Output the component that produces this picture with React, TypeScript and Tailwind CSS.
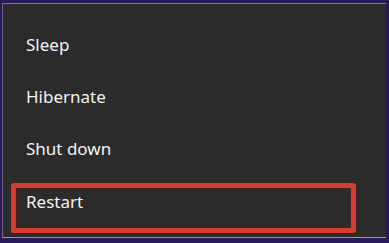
export default function App() {
  const items = ["Sleep", "Hibernate", "Shut down"];

  return (
    <div className="w-[389px] h-[243px] bg-[#2a1a5c] pt-[3px] pl-[2px] pr-[3px] pb-[5px] overflow-hidden">
      <div
        className="h-full bg-[#2b2b2b] border-t border-l border-b border-t-[#7d7688] border-l-[#6f6782] border-b-[#9a8cc8] text-[#f2f2f2]"
        style={{ fontFamily: '"Noto Sans", "Open Sans", sans-serif' }}
      >
        {/* menu entries */}
        <div className="pt-[15px] flex flex-col">
          {items.map((label) => (
            <div key={label} className="h-[52px] flex items-center pl-[23px]">
              <span className="text-[17px] leading-[24px]">{label}</span>
            </div>
          ))}

          {/* highlighted entry */}
          <div className="mt-[8px] ml-[8px] mr-[30px] h-[50px] border-[5px] border-[#dc3a2f] rounded-[3px] shadow-[inset_0_0_2px_#7a1d18] pl-[10px] pt-[2px]">
            <span className="text-[17px] leading-[24px]">Restart</span>
          </div>
        </div>
      </div>
    </div>
  );
}
